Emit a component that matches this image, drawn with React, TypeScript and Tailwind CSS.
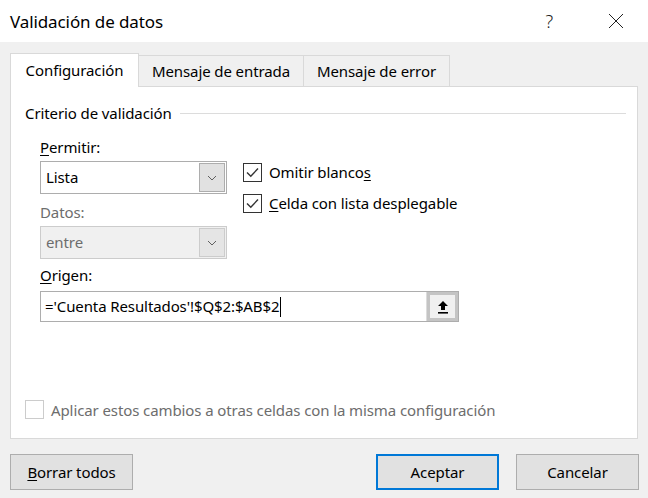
import React from "react";

const font = { fontFamily: '"Noto Sans", "Open Sans", sans-serif', letterSpacing: "-0.1px" };

function Chevron() {
  return (
    <svg width="10" height="6" viewBox="0 0 10 6" fill="none">
      <path d="M1 1l4 4 4-4" stroke="#606060" strokeWidth="1" />
    </svg>
  );
}

function Select({ value, disabled = false }: { value: string; disabled?: boolean }) {
  return (
    <div
      className={
        "flex h-[33px] w-[187px] items-center border " +
        (disabled ? "border-[#cccccc] bg-[#f0f0f0]" : "border-[#adadad] bg-white")
      }
    >
      <span
        className={
          "flex-1 pl-[5px] text-[15px] " + (disabled ? "text-[#6d6d6d]" : "text-black")
        }
      >
        {value}
      </span>
      <div
        className={
          "mr-px flex h-[29px] w-[26px] items-center justify-center border " +
          (disabled ? "border-[#cccccc] bg-[#e5e5e5]" : "border-[#adadad] bg-[#e1e1e1]")
        }
      >
        <Chevron />
      </div>
    </div>
  );
}

function Check({ checked, disabled = false }: { checked: boolean; disabled?: boolean }) {
  return (
    <div
      className={
        "flex h-[19px] w-[19px] shrink-0 items-center justify-center border bg-white " +
        (disabled ? "border-[#cccccc]" : "border-[#333333]")
      }
    >
      {checked && (
        <svg width="13" height="11" viewBox="0 0 13 11" fill="none">
          <path d="M1 5.5l3.8 3.8L12 1.5" stroke="#333333" strokeWidth="1.4" />
        </svg>
      )}
    </div>
  );
}

function Btn({ label, primary = false }: { label: React.ReactNode; primary?: boolean }) {
  return (
    <button
      type="button"
      className={
        "flex h-[36px] w-[123px] items-center justify-center bg-[#e1e1e1] text-[15px] text-black " +
        (primary ? "border-2 border-[#0078d7]" : "border border-[#adadad]")
      }
    >
      {label}
    </button>
  );
}

export default function App() {
  return (
    <div className="flex h-[498px] w-[648px] flex-col bg-[#f0f0f0] text-[15px] text-black" style={font}>
      {/* title bar */}
      <div className="flex h-[42px] shrink-0 items-center bg-white pl-[10px]">
        <span className="text-[17px] leading-none">Validación de datos</span>
        <span className="ml-auto mr-[55px] text-[18px] font-light leading-none text-[#222]">?</span>
        <svg width="16" height="16" viewBox="0 0 16 16" className="mr-[24px]">
          <path d="M1 1l14 14M15 1L1 15" stroke="#222" strokeWidth="1" />
        </svg>
      </div>

      {/* tabs */}
      <div className="mt-[11px] flex items-end px-[10px]">
        <div className="relative z-10 -mb-px flex h-[34px] w-[129px] items-center justify-center border border-b-0 border-[#d9d9d9] bg-white pb-px">
          Configuración
        </div>
        <div className="flex h-[31px] w-[165px] items-center justify-center border-t border-r border-[#d9d9d9] bg-[#f0f0f0]">
          Mensaje de entrada
        </div>
        <div className="flex h-[31px] w-[146px] items-center justify-center border-t border-r border-[#d9d9d9] bg-[#f0f0f0]">
          Mensaje de error
        </div>
      </div>

      {/* pane */}
      <div className="mx-[10px] flex h-[353px] flex-col border border-[#d9d9d9] bg-white">
        <div className="mt-[16px] flex h-[20px] items-center pl-[14px] pr-[11px]">
          <span>Criterio de validación</span>
          <div className="ml-[8px] h-px flex-1 bg-[#dcdcdc]" />
        </div>

        <div className="flex pl-[29px]">
          <div className="flex w-[187px] flex-col">
            <div className="mt-[14px] h-[20px] leading-[20px]">
              <span className="underline underline-offset-2">P</span>ermitir:
            </div>
            <div className="mt-[4px]">
              <Select value="Lista" />
            </div>
            <div className="mt-[8px] h-[20px] leading-[20px] text-[#6d6d6d]">Datos:</div>
            <div className="mt-[4px]">
              <Select value="entre" disabled />
            </div>
          </div>
          <div className="ml-[16px] mt-[40px] flex flex-col gap-[12px]">
            <div className="flex h-[19px] items-center gap-[7px]">
              <Check checked />
              <span>
                Omitir blanco<span className="underline underline-offset-2">s</span>
              </span>
            </div>
            <div className="flex h-[19px] items-center gap-[7px]">
              <Check checked />
              <span>
                <span className="underline underline-offset-2">C</span>elda con lista desplegable
              </span>
            </div>
          </div>
        </div>

        <div className="mt-[6px] h-[20px] pl-[29px] leading-[20px]">
          <span className="underline underline-offset-2">O</span>rigen:
        </div>
        <div className="ml-[29px] mt-[6px] flex h-[31px] w-[419px] items-center border border-[#adadad]">
          <span className="flex flex-1 items-center pl-[4px]">
            ='Cuenta Resultados'!$Q$2:$AB$2
            <span className="ml-px inline-block h-[20px] w-px bg-black" />
          </span>
          <div className="flex h-[29px] w-[32px] items-center justify-center border-l border-[#dcdcdc]">
            <div className="flex h-[29px] w-[31px] items-center justify-center border-[3px] border-[#c4c4c4] bg-[#f0f0f0]">
              <svg width="12" height="14" viewBox="0 0 12 14">
                <path d="M6 1L1 6h3v4h4V6h3z" fill="#000" />
                <rect x="1" y="12" width="10" height="1.6" fill="#000" />
              </svg>
            </div>
          </div>
        </div>

        <div className="mt-auto mb-[17px] flex items-center gap-[7px] pl-[14px]">
          <Check checked={false} disabled />
          <span className="text-[#6d6d6d]">
            Aplicar estos cambios a otras celdas con la misma configuración
          </span>
        </div>
      </div>

      {/* buttons */}
      <div className="mt-[15px] flex pl-[10px] pr-[9px]">
        <div className="w-[124px]">
          <Btn
            label={
              <span>
                <span className="underline underline-offset-2">B</span>orrar todos
              </span>
            }
          />
        </div>
        <div className="ml-auto flex gap-[17px]">
          <Btn label="Aceptar" primary />
          <Btn label="Cancelar" />
        </div>
      </div>
    </div>
  );
}
